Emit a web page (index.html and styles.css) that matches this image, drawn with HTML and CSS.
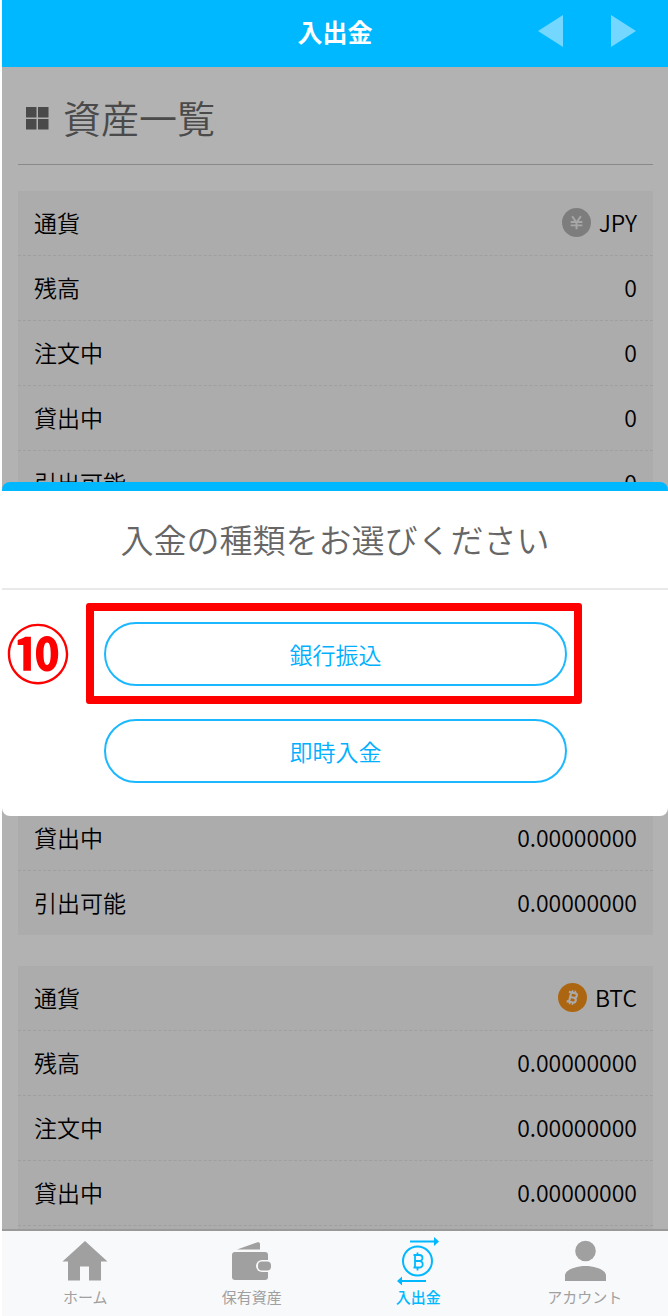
FILE: index.html
```html
<!DOCTYPE html>
<html lang="ja">
<head>
    <meta charset="UTF-8">
    <meta name="viewport" content="width=device-width, initial-scale=1.0">
    <title>入出金</title>
    <link rel="stylesheet" href="styles.css">
</head>
<body>
    <div class="app">
        <header class="header">
            <span class="header-title">入出金</span>
            <div class="header-nav">
                <button type="button" class="arrow" aria-label="前へ">
                    <svg width="25" height="32" viewBox="0 0 25 32"><path d="M25 0v32L0 16z" fill="currentColor"/></svg>
                </button>
                <button type="button" class="arrow" aria-label="次へ">
                    <svg width="25" height="32" viewBox="0 0 25 32"><path d="M0 0v32l25-16z" fill="currentColor"/></svg>
                </button>
            </div>
        </header>

        <main class="main">
            <h1 class="page-title">
                <svg width="23" height="23" viewBox="0 0 23 23"><path d="M0 0h10.500v10.500H0zM12 0h10.500v10.500H12zM0 12h10.500v10.500H0zM12 12h10.500v10.500H12z" fill="currentColor"/></svg>
                <span>資産一覧</span>
            </h1>

            <dl class="card">
                <div class="row">
                    <dt>通貨</dt>
                    <dd>
                        <svg width="29" height="29" viewBox="0 0 30 30">
                            <circle cx="15" cy="15" r="15" fill="#b4b4b4"/>
                            <path d="M10.500 8.500l4.500 6.500 4.500-6.500M15 14v8M9 14.500h12M9 18h12" fill="none" stroke="#f0f0f0" stroke-width="2"/>
                        </svg>
                        JPY
                    </dd>
                </div>
                <div class="row"><dt>残高</dt><dd>0</dd></div>
                <div class="row"><dt>注文中</dt><dd>0</dd></div>
                <div class="row"><dt>貸出中</dt><dd>0</dd></div>
                <div class="row"><dt>引出可能</dt><dd>0</dd></div>
            </dl>

            <dl class="card">
                <div class="row"><dt>通貨</dt><dd>合計</dd></div>
                <div class="row"><dt>円換算</dt><dd>0</dd></div>
                <div class="row"><dt>残高</dt><dd>0.00000000</dd></div>
                <div class="row"><dt>注文中</dt><dd>0.00000000</dd></div>
                <div class="row"><dt>貸出中</dt><dd>0.00000000</dd></div>
                <div class="row"><dt>引出可能</dt><dd>0.00000000</dd></div>
            </dl>

            <dl class="card">
                <div class="row">
                    <dt>通貨</dt>
                    <dd>
                        <svg width="29" height="29" viewBox="0 0 30 30">
                            <circle cx="15" cy="15" r="15" fill="#f7931a"/>
                            <g transform="rotate(13 15 15)" fill="none" stroke="#f4f4f4" stroke-width="2.200">
                                <path d="M10 10h6.500a2.400 2.400 0 0 1 0 5H12.500M16.500 15a2.500 2.500 0 0 1 0 5H10M12.500 10v10"/>
                                <path d="M13.500 7.500v2.500M16.500 7.500v2.500M13.500 20v2.500M16.500 20v2.500" stroke-width="1.500"/>
                            </g>
                        </svg>
                        BTC
                    </dd>
                </div>
                <div class="row"><dt>残高</dt><dd>0.00000000</dd></div>
                <div class="row"><dt>注文中</dt><dd>0.00000000</dd></div>
                <div class="row"><dt>貸出中</dt><dd>0.00000000</dd></div>
                <div class="row"><dt>引出可能</dt><dd>0.00000000</dd></div>
            </dl>

            <div class="overlay">
                <section class="modal" role="dialog" aria-labelledby="modalTitle">
                    <h2 class="modal-title" id="modalTitle">入金の種類をお選びください</h2>
                    <div class="modal-body">
                        <div class="marked">
                            <button type="button" class="btn">銀行振込</button>
                            <div class="mark-frame"></div>
                            <span class="mark-number">⑩</span>
                        </div>
                        <button type="button" class="btn">即時入金</button>
                    </div>
                </section>
            </div>
        </main>

        <nav class="tabs">
            <a href="#" class="tab">
                <svg width="46" height="44" viewBox="0 0 46 44"><path d="M23 3L0.500 23.500H6V42.500H18V28.500H27V42.500H39V23.500H45.500z" fill="currentColor"/></svg>
                ホーム
            </a>
            <a href="#" class="tab">
                <svg width="46" height="44" viewBox="0 0 46 44">
                    <path d="M8 11.500L28.500 4.300Q31 3.600 31 6V11.500z" fill="currentColor"/>
                    <rect x="3" y="14" width="36" height="28" rx="3" fill="currentColor"/>
                    <rect x="27" y="22" width="18" height="12" rx="6" fill="#f8f9fb"/>
                    <rect x="29" y="23.500" width="13" height="9" rx="4" fill="currentColor"/>
                </svg>
                保有資産
            </a>
            <a href="#" class="tab active">
                <svg width="46" height="50" viewBox="0 0 46 50">
                    <g fill="none" stroke="currentColor" stroke-width="2">
                        <path d="M15 5.500H40M31 45H6"/>
                        <circle cx="22.500" cy="25" r="14.500"/>
                        <path d="M18.500 19H24.500A3 3 0 0 1 24.500 25H20M24.500 25A3.200 3.200 0 0 1 24.500 31.500H18.500M20 19V31.500M22.500 16.500V19M22.500 31.500V34.500" stroke-width="1.800"/>
                    </g>
                    <path d="M39 1L44 5.500L39 10zM7 40.500L2 45L7 49.500z" fill="currentColor"/>
                </svg>
                入出金
            </a>
            <a href="#" class="tab">
                <svg width="46" height="44" viewBox="0 0 46 44">
                    <circle cx="23.500" cy="13" r="10.300" fill="currentColor"/>
                    <path d="M3 43V37.500C3 32 13.500 28 23.500 28S44 32 44 37.500V43z" fill="currentColor"/>
                </svg>
                アカウント
            </a>
        </nav>
    </div>
</body>
</html>
```

FILE: styles.css
```css
* {
    box-sizing: border-box;
}
body {
    margin: 0;
    padding-left: 2px;
    background: #fff;
    color: #000;
    font-family: "Noto Sans CJK JP", sans-serif;
    font-size: 23px;
    font-weight: 350;
    line-height: 32px;
}
svg {
    display: block;
    flex: none;
}
button {
    font: inherit;
    cursor: pointer;
}
.app {
    display: flex;
    flex-direction: column;
    height: 100vh;
}

/* header */
.header {
    display: grid;
    grid-template-columns: 1fr auto 1fr;
    align-items: center;
    padding: 0 32px 6px;
    height: 67px;
    background: #00b8ff;
    color: #fff;
}
.header-title {
    grid-column: 2;
    font-size: 25px;
    font-weight: bold;
}
.header-nav {
    display: flex;
    justify-content: flex-end;
    gap: 48px;
}
.arrow {
    padding: 0;
    border: none;
    background: none;
    color: #73d7ff;
}

/* asset list */
.main {
    position: relative;
    flex: 1;
    min-height: 0;
    overflow: hidden;
    padding: 0 15px 0 16px;
}
.page-title {
    display: flex;
    align-items: center;
    gap: 14px;
    margin: 0 0 26px;
    padding: 6px 8px 0;
    height: 98px;
    border-bottom: 1px solid #c4c4c4;
    color: #6b6b6b;
    font-size: 38px;
    font-weight: 350;
}
.page-title span {
    padding-bottom: 4px;
}
.card {
    margin: 0 0 31px;
    background: #f6f6f6;
}
.row {
    display: flex;
    align-items: center;
    justify-content: space-between;
    height: 65px;
    padding: 0 16px;
    border-bottom: 1px dashed #e4e4e4;
}
.row:last-child {
    height: 64px;
    border-bottom: none;
}
.row dt {
    padding-bottom: 2px;
}
.row dd {
    display: flex;
    align-items: center;
    gap: 8px;
    margin: 0;
    padding-bottom: 2px;
}

/* modal */
.overlay {
    position: absolute;
    inset: 0;
    display: flex;
    align-items: center;
    padding-top: 2px;
    background: rgba(0, 0, 0, 0.3);
}
.modal {
    width: 100%;
    border-top: 9px solid #00b8ff;
    border-radius: 8px;
    background: #fff;
}
.modal-title {
    margin: 0;
    padding: 32px 0 33px;
    border-bottom: 2px solid #e9e9e9;
    color: #666;
    font-size: 33px;
    font-weight: 350;
    text-align: center;
}
.modal-body {
    display: flex;
    flex-direction: column;
    gap: 33px;
    padding: 32px 101px 33px 102px;
}
.btn {
    display: block;
    width: 100%;
    height: 64px;
    padding: 0;
    border: 2px solid #1cb8ff;
    border-radius: 32px;
    background: #fff;
    color: #00b0ff;
}
.marked {
    position: relative;
}
.mark-frame {
    position: absolute;
    inset: -19px -15px -18px -18px;
    border: 8px solid #f00;
    border-radius: 3px;
    pointer-events: none;
}
.mark-number {
    position: absolute;
    right: 100%;
    top: -4px;
    margin-right: 34px;
    color: #f00;
    font-size: 64px;
    font-weight: bold;
    line-height: 64px;
}

/* bottom tabs */
.tabs {
    display: grid;
    grid-template-columns: repeat(4, 1fr);
    height: 87px;
    border-top: 2px solid #999;
    background: #f8f9fb;
}
.tab {
    display: flex;
    flex-direction: column;
    align-items: center;
    justify-content: flex-end;
    padding-bottom: 8px;
    color: #a0a0a0;
    font-size: 15px;
    font-weight: 400;
    line-height: 22px;
    text-decoration: none;
}
.tab svg {
    margin-bottom: 4px;
}
.tab.active {
    color: #00b8ff;
    font-weight: 500;
}
.tab.active svg {
    margin-bottom: 0;
}
```
